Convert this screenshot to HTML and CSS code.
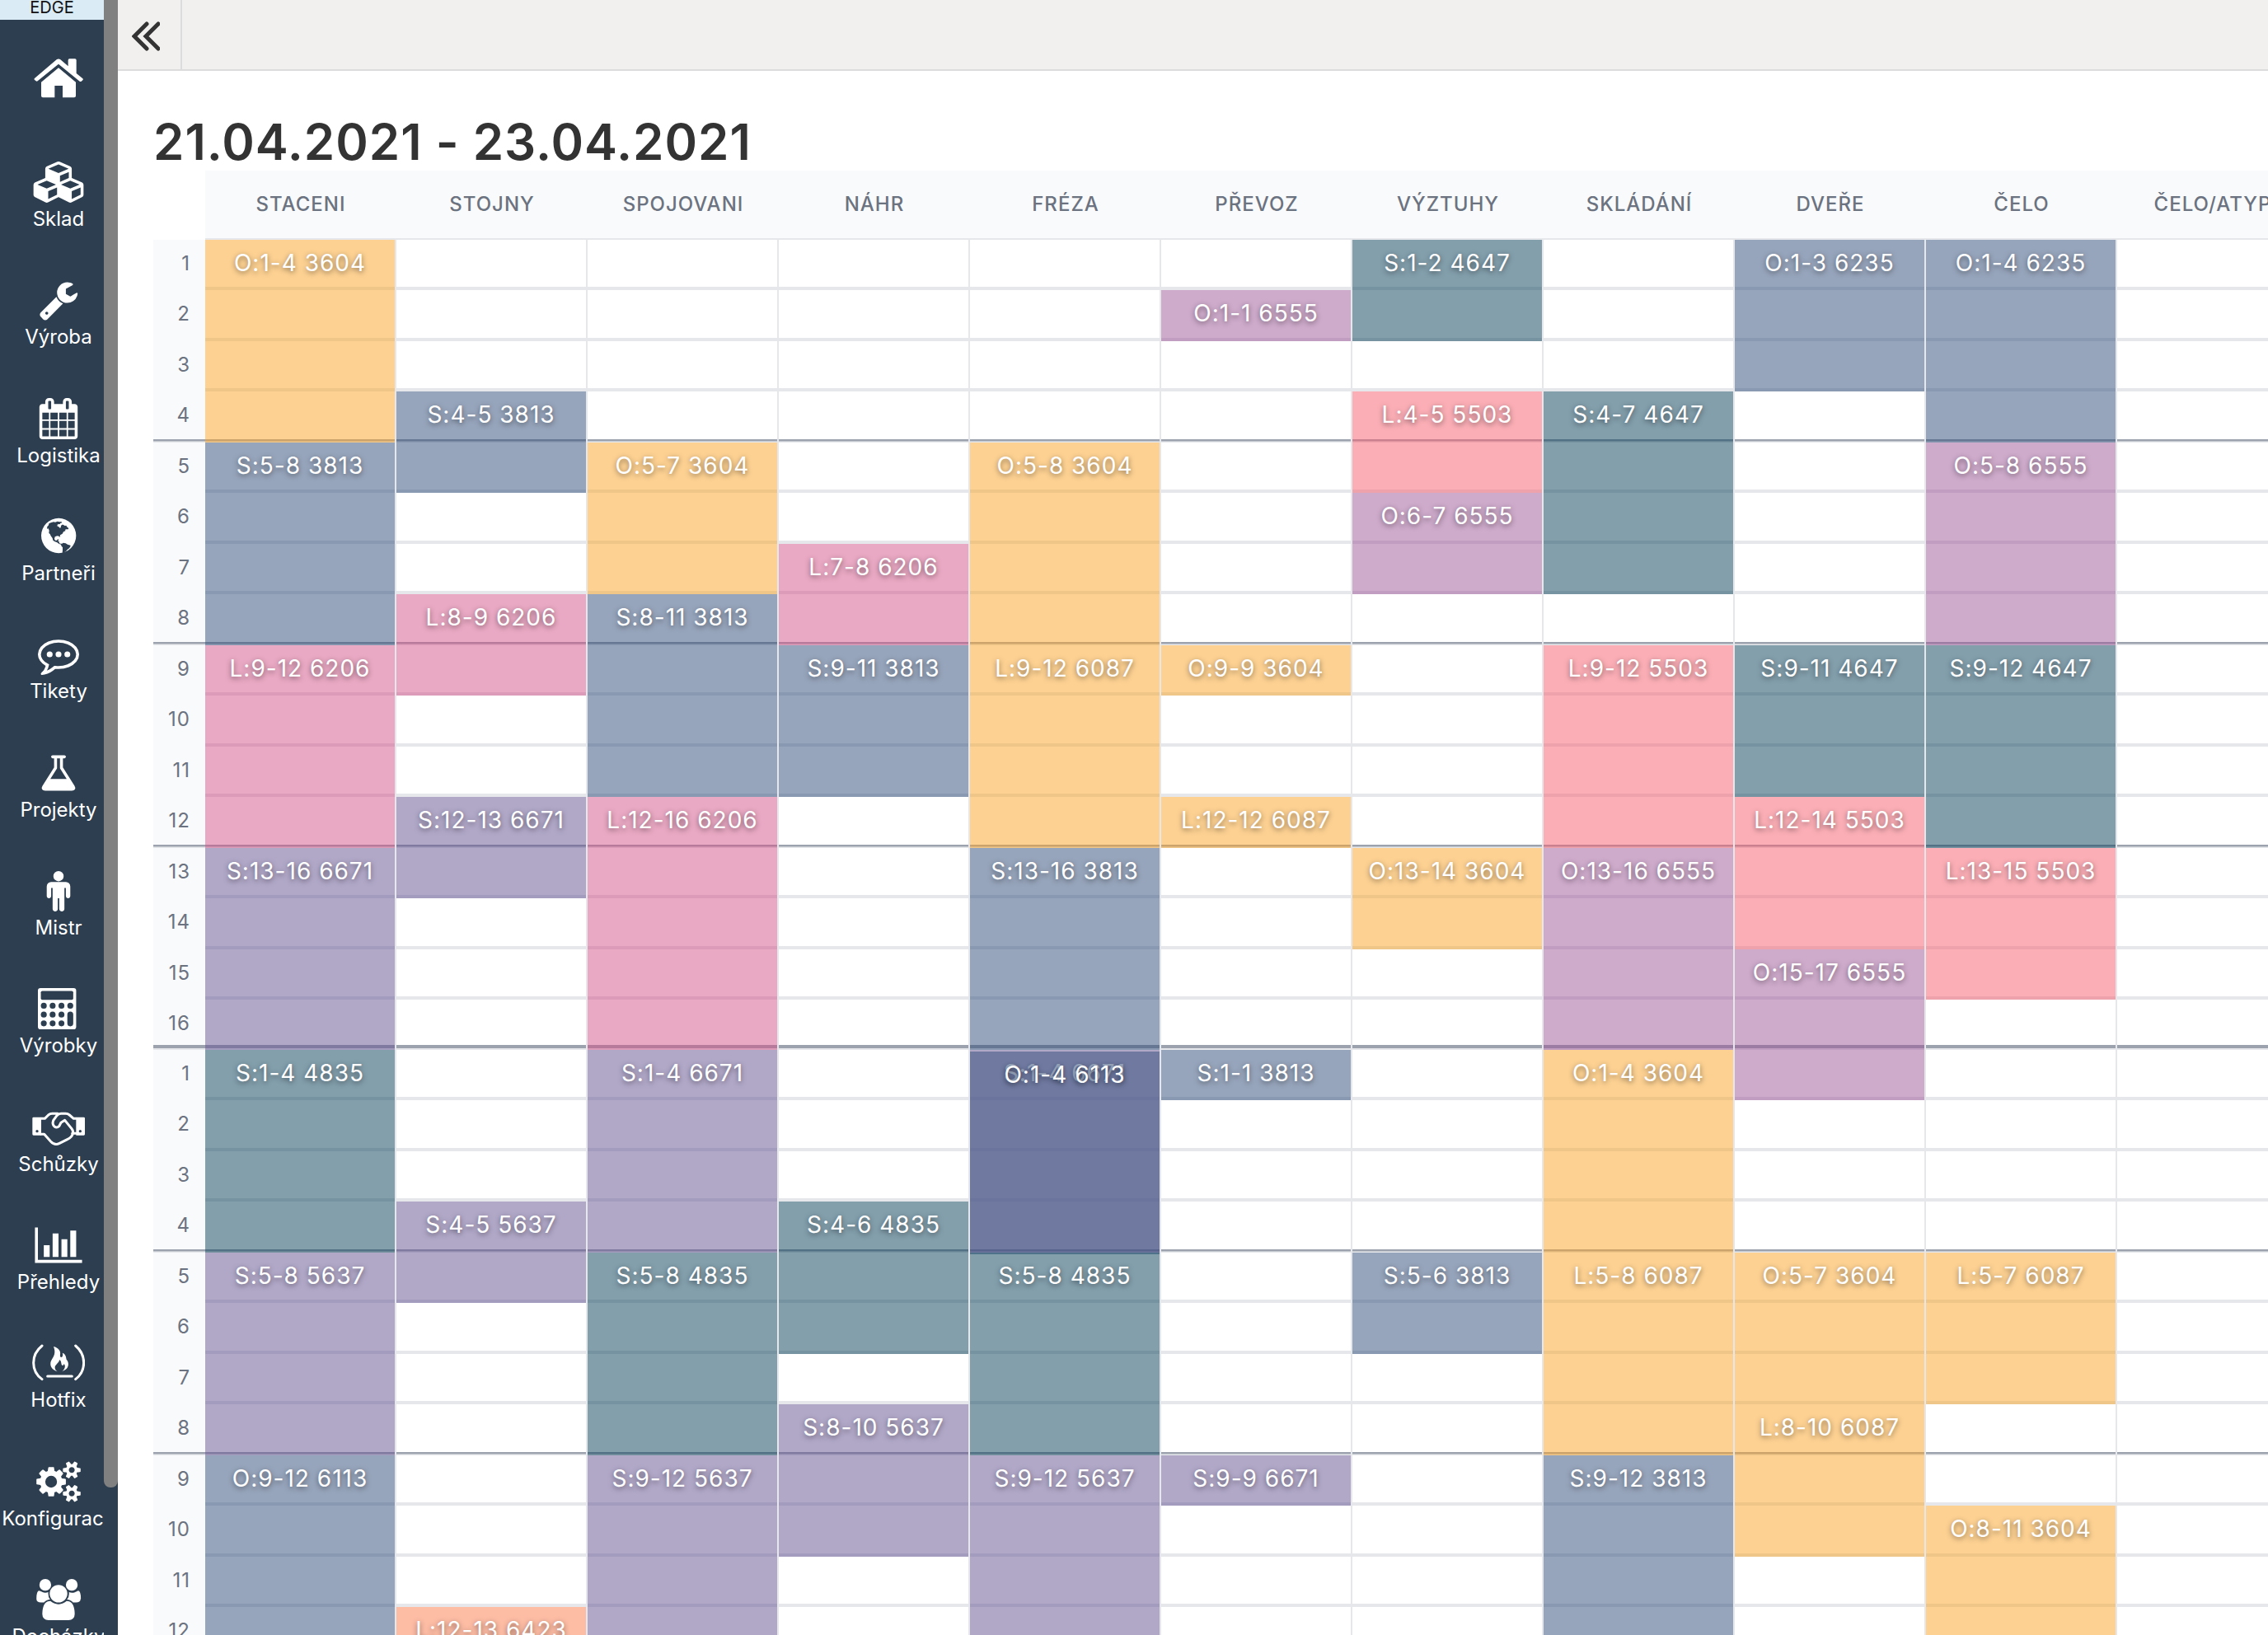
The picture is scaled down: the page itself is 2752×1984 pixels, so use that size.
FILE: index.html
```
<!DOCTYPE html>
<html lang="cs">
<head>
<meta charset="utf-8">
<meta name="viewport" content="width=device-width, initial-scale=1">
<title>Plán výroby</title>
<link rel="stylesheet" href="styles.css">
</head>
<body>
<div class="app">
  <aside class="sidebar">
    <nav class="nav">
      <div class="env">EDGE</div>
      <ul class="nav-list">
        <li><a class="nav-item" href="#" aria-label="Domů">
          <svg class="icon" viewBox="117 214 192 150"><path d="M150 300L213 248l63 52v50q0 6-6 6h-42v-43h-29v43h-43q-6 0-6-6z"/><path d="M126 286L206 218q7-5 14 0l28 24v-22q0-5 5-5h20q5 0 5 5v48l23 19q3 3 0 6l-5 4q-3 2-6 0L213 234l-76 62q-3 2-6 0l-5-4q-3-3 0-6z"/></svg></a></li>
        <li><a class="nav-item" href="#">
          <svg class="icon" viewBox="0 0 2176 1792"><path d="M640 1632l384-192v-314l-384 164v342zm-64-454l404-173-404-173-404 173zm1088 454l384-192v-314l-384 164v342zm-64-454l404-173-404-173-404 173zm-448-293l384-165v-266l-384 164v267zm-64-379l441-189-441-189-441 189zm1088 518v416q0 36-19 67t-52 47l-448 224q-25 14-57 14t-57-14l-448-224q-4-2-7-4-2 2-7 4l-448 224q-25 14-57 14t-57-14l-448-224q-33-16-52-47t-19-67v-416q0-38 21.5-70t56.5-48l434-186v-400q0-38 21.5-70t56.5-48l448-192q23-10 50-10t50 10l448 192q35 16 56.5 48t21.5 70v400l434 186q36 16 57 48t21 70z"/></svg>
          <span class="nav-label">Sklad</span></a></li>
        <li><a class="nav-item" href="#">
          <svg class="icon" viewBox="0 0 1792 1792"><path d="M448 1472q0-26-19-45t-45-19-45 19-19 45 19 45 45 19 45-19 19-45zm644-420l-682 682q-37 37-90 37-52 0-91-37l-106-108q-38-36-38-90 0-53 38-91l681-681q39 98 114.500 173.500t173.500 114.500zm634-435q0 39-23 106-47 134-164.500 217.500t-258.500 83.500q-185 0-316.500-131.500t-131.500-316.500 131.500-316.500 316.500-131.500q58 0 121.500 16.500t107.500 46.500q16 11 16 28t-16 28l-293 169v224l193 107q5-3 79-48.500t135.500-81 70.500-35.500q15 0 23.500 10t8.500 25z"/></svg>
          <span class="nav-label">Výroba</span></a></li>
        <li><a class="nav-item" href="#">
          <svg class="icon" viewBox="0 0 1792 1792"><path d="M192 1664h288v-288h-288v288zm352 0h320v-288h-320v288zm-352-352h288v-320h-288v320zm352 0h320v-320h-320v320zm-352-384h288v-288h-288v288zm736 736h320v-288h-320v288zm-384-736h320v-288h-320v288zm768 736h288v-288h-288v288zm-384-352h320v-320h-320v320zm-352-864v-288q0-13-9.500-22.500t-22.500-9.500h-64q-13 0-22.500 9.500t-9.500 22.500v288q0 13 9.500 22.500t22.500 9.500h64q13 0 22.500-9.500t9.500-22.500zm736 864h288v-320h-288v320zm-384-384h320v-288h-320v288zm384 0h288v-288h-288v288zm32-480v-288q0-13-9.500-22.500t-22.500-9.500h-64q-13 0-22.500 9.500t-9.500 22.500v288q0 13 9.500 22.500t22.500 9.500h64q13 0 22.500-9.500t9.500-22.500zm384-64v1280q0 52-38 90t-90 38h-1408q-52 0-90-38t-38-90v-1280q0-52 38-90t90-38h128v-96q0-66 47-113t113-47h64q66 0 113 47t47 113v96h384v-96q0-66 47-113t113-47h64q66 0 113 47t47 113v96h128q52 0 90 38t38 90z"/></svg>
          <span class="nav-label">Logistika</span></a></li>
        <li><a class="nav-item" href="#">
          <svg class="icon" viewBox="117 557 192 150"><circle cx="213.500" cy="629" r="63.500"/><path class="cut" d="M171 604l1-8 5-5 1-6 7-3 10-3 6 1 8-3 8 2 6-1 3 4-6 1-2 4-8 1-2 6 6 3 4 4 3-1 1-6 3-5 5 0 6 4 5-1 4 6 5 4-2 4-7 0-5 2 3 3-8 4-4 7-8 5-1 8-3-4-7-1-8 3-2 8 3 5 6 0 3-4 4 1-3 6 4 1 1 7 5 1 5 0 4-3 9 2 7 4 10 3 1 3-5 8-7 5-5 6-9 5-4 2 1-12 0-9-5-6-1-5-7-2-8-6-7-2-7-5-2-8-6-8-3-7-4-3 1-10-3-7z"/></svg>
          <span class="nav-label">Partneři</span></a></li>
        <li><a class="nav-item" href="#">
          <svg class="icon" viewBox="0 0 1792 1792"><circle cx="512" cy="896" r="128"/><circle cx="896" cy="896" r="128"/><circle cx="1280" cy="896" r="128"/><path d="M896 384q-204 0-381.500 69.500t-282 187.500-104.500 255q0 112 71.500 213.500t201.500 175.500l87 50-27 96q-24 91-70 172 152-63 275-171l43-38 57 6q69 8 130 8 204 0 381.500-69.500t282-187.500 104.500-255-104.500-255-282-187.500-381.500-69.500zm896 512q0 174-120 321.500t-326 233-450 85.500q-70 0-145-8-198 175-460 242-49 14-114 22h-5q-15 0-27-10.500t-16-27.500v-1q-3-4-.5-12t2-10 4.500-9.500l6-9 7-8.500 8-9q7-8 31-34.500t34.500-38 31-39.500 32.500-51 27-59 26-76q-157-89-247.500-220t-90.500-281q0-174 120-321.500t326-233 450-85.500 450 85.500 326 233 120 321.500z"/></svg>
          <span class="nav-label">Tikety</span></a></li>
        <li><a class="nav-item" href="#">
          <svg class="icon" viewBox="0 0 1792 1792"><path d="M1591 1448q56 89 21.500 152.500t-140.500 63.500h-1152q-106 0-140.500-63.500t21.500-152.500l503-793v-399h-64q-26 0-45-19t-19-45 19-45 45-19h512q26 0 45 19t19 45-19 45-45 19h-64v399zm-779-725l-272 429h712l-272-429-20-31v-436h-128v436z"/></svg>
          <span class="nav-label">Projekty</span></a></li>
        <li><a class="nav-item" href="#">
          <svg class="icon" viewBox="0 0 1792 1792"><path d="M1408 704v416q0 40-28 68t-68 28-68-28-28-68v-352h-64v912q0 46-33 79t-79 33-79-33-33-79v-464h-64v464q0 46-33 79t-79 33-79-33-33-79v-912h-64v352q0 40-28 68t-68 28-68-28-28-68v-416q0-80 56-136t136-56h640q80 0 136 56t56 136zm-288-448q0 93-65.500 158.500t-158.500 65.500-158.500-65.500-65.500-158.500 65.500-158.500 158.500-65.500 158.500 65.500 65.500 158.500z"/></svg>
          <span class="nav-label">Mistr</span></a></li>
        <li><a class="nav-item" href="#">
          <svg class="icon" viewBox="0 0 1792 1792"><rect width="1664" height="1792" rx="110"/><g class="cut"><rect x="128" y="128" width="1408" height="384" rx="64"/><circle cx="256" cy="768" r="128"/><circle cx="640" cy="768" r="128"/><circle cx="1024" cy="768" r="128"/><circle cx="1408" cy="768" r="128"/><circle cx="256" cy="1152" r="128"/><circle cx="640" cy="1152" r="128"/><circle cx="1024" cy="1152" r="128"/><circle cx="256" cy="1536" r="128"/><circle cx="640" cy="1536" r="128"/><circle cx="1024" cy="1536" r="128"/><rect x="1280" y="1024" width="256" height="640" rx="128"/></g></svg>
          <span class="nav-label">Výrobky</span></a></li>
        <li><a class="nav-item" href="#">
          <svg class="icon" viewBox="117 66 192 150"><path d="M122 104h28v66h-28q-4 0-4-4v-58q0-4 4-4zM277 104h28q4 0 4 4v58q0 4-4 4h-28z"/><circle class="cut" cx="135" cy="155" r="5"/><circle class="cut" cx="292" cy="155" r="5"/><path class="line" d="M150 109h13l13-13q6-5 14-5h20M277 109h-9l-15-13q-6-5-14-5h-17q-9 0-15 7l-13 18q-5 13 4 22 9 6 17-1l7-13 14-9 25 31q8 10 2 18M150 166h11l24 27q14 15 30 7l30-15q18-8 20-22h12"/></svg>
          <span class="nav-label">Schůzky</span></a></li>
        <li><a class="nav-item" href="#">
          <svg class="icon" viewBox="0 0 2048 1792"><path d="M640 896v512h-256v-512h256zm384-512v1024h-256v-1024h256zm1024 1152v128h-2048v-1536h128v1408h1920zm-640-896v768h-256v-768h256zm384-384v1152h-256v-1152h256z"/></svg>
          <span class="nav-label">Přehledy</span></a></li>
        <li><a class="nav-item" href="#">
          <svg class="icon" viewBox="117 -33 192 150"><path class="line" d="M153-21q-31 25-31 62t31 60M275-21q30 25 30 62t-30 60M173 90h89"/><path d="M195-18C212-14 222-2 219 11c-2 9 5 13 8 7 2-4 2-9 0-13 12 4 13 14 15 24 11 11 8 30-4 37l-12 7c10-9 14-20 7-28-2 7-7 7-9 2-2-8-1-13-8-17 0 12-18 18-16 30 1 7 5 10 9 13-17-5-27-18-25-31C186 25 208 15 195-18z"/></svg>
          <span class="nav-label">Hotfix</span></a></li>
        <li><a class="nav-item" href="#">
          <svg class="icon" viewBox="0 0 1920 1792"><path d="M896 896q0-106-75-181t-181-75-181 75-75 181 75 181 181 75 181-75 75-181zm768 512q0-52-38-90t-90-38-90 38-38 90q0 53 37.500 90.500t90.500 37.500 90.500-37.500 37.500-90.500zm0-1024q0-52-38-90t-90-38-90 38-38 90q0 53 37.500 90.500t90.500 37.500 90.500-37.500 37.500-90.500zm-384 421v185q0 10-7 19.500t-16 10.500l-155 24q-11 35-32 76 34 48 90 115 7 11 7 20 0 12-7 19-23 30-82.500 89.500t-78.500 59.500q-11 0-21-7l-115-90q-37 19-77 31-11 108-23 155-7 24-30 24h-186q-11 0-20-7.500t-10-17.500l-23-153q-34-10-75-31l-118 89q-7 7-20 7-11 0-21-8-144-133-144-160 0-9 7-19 10-14 41-53t47-61q-23-44-35-82l-152-24q-10-1-17-9.500t-7-19.500v-185q0-10 7-19.500t16-10.500l155-24q11-35 32-76-34-48-90-115-7-11-7-20 0-12 7-20 22-30 82-89t79-59q11 0 21 7l115 90q34-18 77-32 11-108 23-154 7-24 30-24h186q11 0 20 7.500t10 17.500l23 153q34 10 75 31l118-89q8-7 20-7 11 0 21 8 144 133 144 160 0 8-7 19-12 16-42 54t-45 60q23 48 34 82l152 23q10 2 17 10.500t7 19.500zm640 533v140q0 16-149 31-12 27-30 52 51 113 51 138 0 4-4 7-122 71-124 71-8 0-46-47t-52-68q-20 2-30 2t-30-2q-14 21-52 68t-46 47q-2 0-124-71-4-3-4-7 0-25 51-138-18-25-30-52-149-15-149-31v-140q0-16 149-31 13-29 30-52-51-113-51-138 0-4 4-7 4-2 35-20t59-34 30-16q8 0 46 46.500t52 67.500q20-2 30-2t30 2q51-71 92-112l6-2q4 0 124 70 4 3 4 7 0 25-51 138 17 23 30 52 149 15 149 31zm0-1024v140q0 16-149 31-12 27-30 52 51 113 51 138 0 4-4 7-122 71-124 71-8 0-46-47t-52-68q-20 2-30 2t-30-2q-14 21-52 68t-46 47q-2 0-124-71-4-3-4-7 0-25 51-138-18-25-30-52-149-15-149-31v-140q0-16 149-31 13-29 30-52-51-113-51-138 0-4 4-7 4-2 35-20t59-34 30-16q8 0 46 46.500t52 67.500q20-2 30-2t30 2q51-71 92-112l6-2q4 0 124 70 4 3 4 7 0 25-51 138 17 23 30 52 149 15 149 31z"/></svg>
          <span class="nav-label">Konfigurace</span></a></li>
        <li><a class="nav-item" href="#">
          <svg class="icon" viewBox="0 0 1920 1792"><path d="M593 896q-162 5-265 128h-134q-82 0-138-40.500t-56-118.500q0-353 124-353 6 0 43.500 21t97.500 42.500 119 21.500q67 0 133-23-5 37-5 66 0 159 81 256zM1664 1533q0 120-73 189.500t-194 69.500h-874q-121 0-194-69.500t-73-189.500q0-53 3.500-103.500t14-109 26.500-108.500 43-97.500 62-81 85.500-53.500 111.500-20q10 0 43 21.500t73 48 107 48 135 21.500 135-21.500 107-48 73-48 43-21.500q61 0 111.500 20t85.500 53.500 62 81 43 97.500 26.500 108.500 14 109 3.500 103.500zM640 256q0 106-75 181t-181 75-181-75-75-181 75-181 181-75 181 75 75 181zM1344 640q0 159-112.500 271.500t-271.500 112.500-271.500-112.500-112.500-271.500 112.500-271.500 271.500-112.500 271.500 112.500 112.500 271.500zM1920 865q0 78-56 118.500t-138 40.500h-134q-103-123-265-128 93-94 93-253 0-29-5-66 66 23 133 23 59 0 119-21.500t97.500-42.500 43.500-21q124 0 124 353zM1792 256q0 106-75 181t-181 75-181-75-75-181 75-181 181-75 181 75 75 181z"/></svg>
          <span class="nav-label">Docházky</span></a></li>
      </ul>
    </nav>
    <div class="scroll-track"><div class="scroll-thumb"></div></div>
  </aside>
  <div class="page">
    <header class="topbar">
      <button class="collapse" type="button" aria-label="Sbalit menu">
        <svg class="collapse-icon" viewBox="0 0 34 36"><path d="M18 3L3 18l15 15M32 3L17 18l15 15"/></svg>
      </button>
    </header>
    <main class="content">
      <h1 class="title">21.04.2021 - 23.04.2021</h1>
      <table class="plan" id="plan">
        <colgroup><col class="col-slot"><col span="11" class="col-station"></colgroup>
        <thead>
          <tr>
            <td class="corner"></td>
            <th scope="col">STACENI</th><th scope="col">STOJNY</th><th scope="col">SPOJOVANI</th><th scope="col">NÁHR</th><th scope="col">FRÉZA</th><th scope="col">PŘEVOZ</th><th scope="col">VÝZTUHY</th><th scope="col">SKLÁDÁNÍ</th><th scope="col">DVEŘE</th><th scope="col">ČELO</th><th scope="col">ČELO/ATYP</th>
          </tr>
        </thead>
      </table>
    </main>
  </div>
</div>
<script src="plan.js"></script>
</body>
</html>
```
FILE: styles.css
```
* { box-sizing: border-box; }

body {
  margin: 0;
  font-family: Inter, "Liberation Sans", sans-serif;
  color: #333;
  background: #fff;
}

.app {
  display: flex;
  height: 100vh;
  overflow: hidden;
}

/* Sidebar */
.sidebar {
  display: flex;
  flex: none;
  background: #2c3e50;
}
.nav {
  width: 126px;
  overflow: hidden;
}
.env {
  height: 24px;
  background: #daebf5;
  color: #111;
  font-size: 20px;
  line-height: 18px;
  text-align: center;
}
.nav-list {
  width: 142px;
  margin: 0;
  padding: 0;
  list-style: none;
}
.nav-item {
  display: flex;
  flex-direction: column;
  align-items: center;
  justify-content: center;
  gap: 4px;
  height: 143px;
  color: #fff;
  text-decoration: none;
}
.nav-list li:nth-child(3n) .nav-item { height: 144px; }
.nav-label {
  font-size: 24px;
  line-height: 32px;
  font-weight: 400;
}
.icon {
  width: 64px;
  height: 50px;
  fill: #fff;
}
.icon .cut { fill: #2c3e50; }
.icon .line {
  fill: none;
  stroke: #fff;
  stroke-width: 9;
  stroke-linecap: round;
  stroke-linejoin: round;
}
.scroll-track { width: 17px; }
.scroll-thumb {
  height: 91%;
  background: #808080;
  border-radius: 0 0 8px 8px;
}

/* Page */
.page {
  flex: 1;
  min-width: 0;
  overflow: hidden;
}
.topbar {
  display: flex;
  height: 86px;
  background: #f1f0ee;
  border-bottom: 2px solid #dcdcdc;
}
.collapse {
  display: flex;
  align-items: center;
  justify-content: center;
  width: 78px;
  padding: 3px 8px 0 0;
  border: 0;
  border-right: 2px solid #dadcde;
  background: none;
}
.collapse-icon {
  width: 34px;
  height: 36px;
  fill: none;
  stroke: #333;
  stroke-width: 5;
  stroke-linecap: round;
}
.content { padding: 51px 0 0 43px; }
.title {
  margin: 0;
  font-size: 60px;
  line-height: 70px;
  font-weight: 600;
  letter-spacing: 1px;
}

/* Plan */
.plan {
  table-layout: fixed;
  width: 2615px;
  border-collapse: separate;
  border-spacing: 0;
}
.col-slot { width: 63px; }
.col-station { width: 232px; }
.plan th, .plan td { padding: 0; }
.plan thead th {
  height: 84px;
  padding-bottom: 2px;
  border-bottom: 2px solid #e5e7eb;
  background: #f9fafb;
  color: #6b7280;
  font-size: 24px;
  font-weight: 500;
  letter-spacing: 1px;
  vertical-align: middle;
}
.plan tbody tr { height: 61px; }
.plan tbody tr:nth-child(even) { height: 62px; }
.plan tbody tr.day-end { height: 61px; }
.plan tbody th {
  padding-right: 18px;
  background: #f9fafb;
  color: #6b7280;
  font-size: 24px;
  line-height: 57px;
  font-weight: 400;
  letter-spacing: 1px;
  text-align: right;
  vertical-align: top;
}
.plan tbody td {
  position: relative;
  border-right: 2px solid #e5e7eb;
  background: linear-gradient(#e5e7eb, #e5e7eb) bottom / 100% 4px no-repeat;
}
.plan tr.break th,
.plan tr.break td {
  background-image: linear-gradient(#9ca3af 0 2px, #c4c8cf 2px 3px, #e5e7eb 3px 4px);
  background-position: bottom;
  background-size: 100% 4px;
  background-repeat: no-repeat;
}
.plan tr.day-end th,
.plan tr.day-end td {
  background-image: linear-gradient(#9ca3af 0 4px, #e5e7eb 4px 6px);
  background-position: bottom;
  background-size: 100% 6px;
  background-repeat: no-repeat;
}

.job {
  position: absolute;
  z-index: 1;
  top: 0;
  left: 0;
  right: 0;
  color: #fff;
  font-size: 28px;
  line-height: 57px;
  font-weight: 400;
  letter-spacing: 1px;
  text-align: center;
  text-shadow: 0 2px 6px rgba(0, 0, 0, .5);
  white-space: nowrap;
}
.job-over { top: 2px; }
.orange { background: rgba(252, 163, 37, .5); }
.blue { background: rgba(47, 75, 121, .5); }
.teal { background: rgba(7, 63, 89, .5); }
.pink { background: rgba(211, 81, 135, .5); }
.violet { background: rgba(99, 81, 145, .5); }
.mauve { background: rgba(157, 85, 151, .5); }
.red { background: rgba(247, 93, 109, .5); }
.salmon { background: rgba(251, 121, 73, .5); }
```
FILE: plan.js
```
const DAYS = 2;
const SLOTS = 16;
const STATIONS = 11;

// [station, day, slot, number of slots, label, colour]
const JOBS = [
  [0, 0, 1, 4, "O:1-4 3604", "orange"],
  [0, 0, 5, 4, "S:5-8 3813", "blue"],
  [0, 0, 9, 4, "L:9-12 6206", "pink"],
  [0, 0, 13, 4, "S:13-16 6671", "violet"],
  [0, 1, 1, 4, "S:1-4 4835", "teal"],
  [0, 1, 5, 4, "S:5-8 5637", "violet"],
  [0, 1, 9, 4, "O:9-12 6113", "blue"],
  [1, 0, 4, 2, "S:4-5 3813", "blue"],
  [1, 0, 8, 2, "L:8-9 6206", "pink"],
  [1, 0, 12, 2, "S:12-13 6671", "violet"],
  [1, 1, 4, 2, "S:4-5 5637", "violet"],
  [1, 1, 12, 2, "L:12-13 6423", "salmon"],
  [2, 0, 5, 3, "O:5-7 3604", "orange"],
  [2, 0, 8, 4, "S:8-11 3813", "blue"],
  [2, 0, 12, 5, "L:12-16 6206", "pink"],
  [2, 1, 1, 4, "S:1-4 6671", "violet"],
  [2, 1, 5, 4, "S:5-8 4835", "teal"],
  [2, 1, 9, 4, "S:9-12 5637", "violet"],
  [3, 0, 7, 2, "L:7-8 6206", "pink"],
  [3, 0, 9, 3, "S:9-11 3813", "blue"],
  [3, 1, 4, 3, "S:4-6 4835", "teal"],
  [3, 1, 8, 3, "S:8-10 5637", "violet"],
  [4, 0, 5, 4, "O:5-8 3604", "orange"],
  [4, 0, 9, 4, "L:9-12 6087", "orange"],
  [4, 0, 13, 4, "S:13-16 3813", "blue"],
  [4, 1, 1, 4, "S:1-4 6671", "violet"],
  [4, 1, 1, 4, "O:1-4 6113", "blue job-over"],
  [4, 1, 5, 4, "S:5-8 4835", "teal"],
  [4, 1, 9, 4, "S:9-12 5637", "violet"],
  [5, 0, 2, 1, "O:1-1 6555", "mauve"],
  [5, 0, 9, 1, "O:9-9 3604", "orange"],
  [5, 0, 12, 1, "L:12-12 6087", "orange"],
  [5, 1, 1, 1, "S:1-1 3813", "blue"],
  [5, 1, 9, 1, "S:9-9 6671", "violet"],
  [6, 0, 1, 2, "S:1-2 4647", "teal"],
  [6, 0, 4, 2, "L:4-5 5503", "red"],
  [6, 0, 6, 2, "O:6-7 6555", "mauve"],
  [6, 0, 13, 2, "O:13-14 3604", "orange"],
  [6, 1, 5, 2, "S:5-6 3813", "blue"],
  [7, 0, 4, 4, "S:4-7 4647", "teal"],
  [7, 0, 9, 4, "L:9-12 5503", "red"],
  [7, 0, 13, 4, "O:13-16 6555", "mauve"],
  [7, 1, 1, 4, "O:1-4 3604", "orange"],
  [7, 1, 5, 4, "L:5-8 6087", "orange"],
  [7, 1, 9, 4, "S:9-12 3813", "blue"],
  [8, 0, 1, 3, "O:1-3 6235", "blue"],
  [8, 0, 9, 3, "S:9-11 4647", "teal"],
  [8, 0, 12, 3, "L:12-14 5503", "red"],
  [8, 0, 15, 3, "O:15-17 6555", "mauve"],
  [8, 1, 5, 3, "O:5-7 3604", "orange"],
  [8, 1, 8, 3, "L:8-10 6087", "orange"],
  [9, 0, 1, 4, "O:1-4 6235", "blue"],
  [9, 0, 5, 4, "O:5-8 6555", "mauve"],
  [9, 0, 9, 4, "S:9-12 4647", "teal"],
  [9, 0, 13, 3, "L:13-15 5503", "red"],
  [9, 1, 5, 3, "L:5-7 6087", "orange"],
  [9, 1, 10, 4, "O:8-11 3604", "orange"]
];

const body = document.createElement("tbody");
for (let i = 0; i < DAYS * SLOTS; i++) {
  const slot = (i % SLOTS) + 1;
  const row = body.insertRow();
  if (slot === SLOTS) row.className = "day-end";
  else if (slot % 4 === 0) row.className = "break";
  const head = document.createElement("th");
  head.scope = "row";
  head.textContent = slot;
  row.append(head);
  for (let s = 0; s < STATIONS; s++) row.insertCell();
}
document.getElementById("plan").append(body);

const rows = [...body.rows];
const heights = rows.map(row => row.offsetHeight);
for (const [station, day, slot, count, label, colour] of JOBS) {
  const first = day * SLOTS + slot - 1;
  const job = document.createElement("div");
  job.className = "job " + colour;
  job.textContent = label;
  job.style.height = heights.slice(first, first + count).reduce((a, b) => a + b, 0) + "px";
  rows[first].cells[station + 1].append(job);
}
```
